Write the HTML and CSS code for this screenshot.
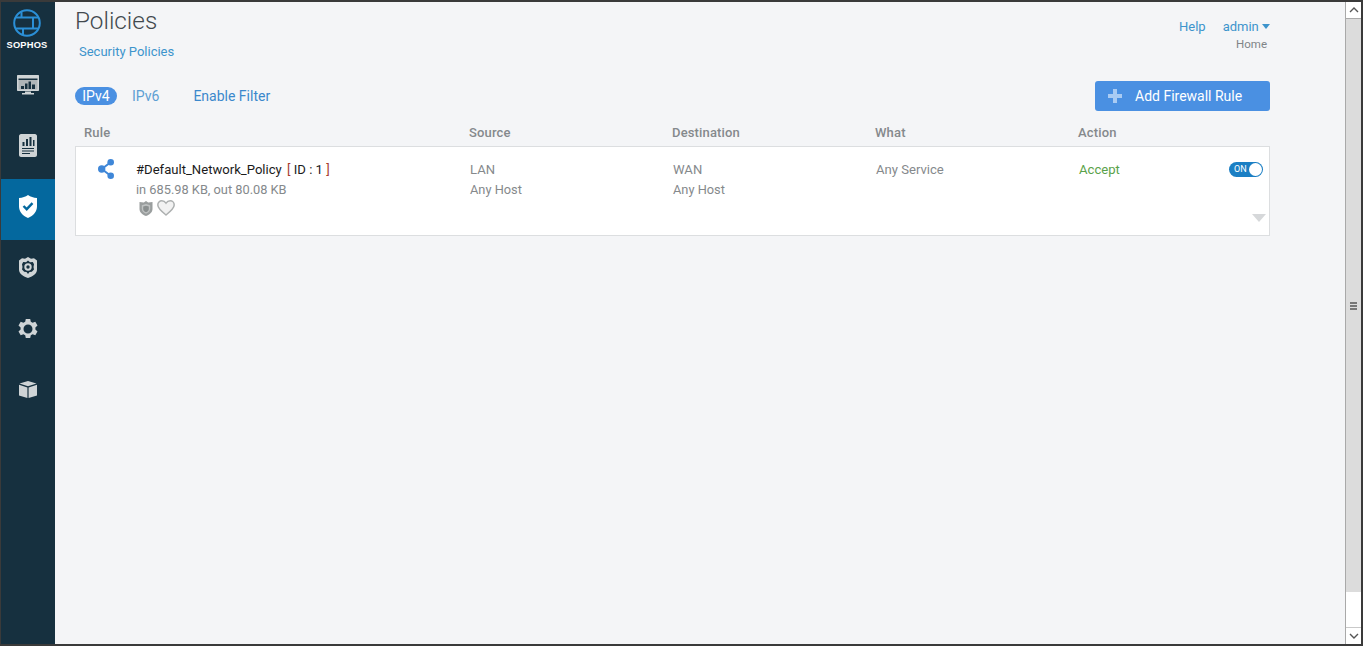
FILE: index.html
```html
<!DOCTYPE html>
<html lang="en">
<head>
<meta charset="utf-8">
<title>Policies</title>
<link rel="stylesheet" href="styles.css">
</head>
<body>
<div class="frame">
  <nav class="sidebar">
    <div class="logo">
      <svg class="logo-mark" viewBox="0 0 28 28" width="28" height="28" fill="none" stroke="#2b8fd6" stroke-width="2">
        <circle cx="14" cy="14" r="12.800"/>
        <path d="M3 8.500H25M3 19.500H25M8.500 2.500V8.500M20 8.500V19.500M10 19.500V26"/>
      </svg>
      <span class="logo-text">SOPHOS</span>
    </div>
    <a class="nav-item">
      <svg viewBox="0 0 22 20" width="22" height="20"><path fill="#cfd4d6" d="M0 1C0 .4.400 0 1 0h20c.6 0 1 .4 1 1v14c0 .6-.4 1-1 1H1c-.6 0-1-.4-1-1z"/><path fill="#16303f" d="M1.500 3.500h19v1.500h-19z"/><path fill="#aeb5b8" d="M1.500 5h19v9.500h-19z"/><path fill="#16303f" d="M4 11h3v3H4zM8 8.500h2.500V14H8zM11.500 6.500H14V14h-2.500zM15 9.500h3V14h-3z"/><path fill="#cfd4d6" d="M8 16.500h6V18h3v1.500H5V18h3z"/></svg>
    </a>
    <a class="nav-item">
      <svg viewBox="0 0 18 23" width="18" height="23"><path fill="#cfd4d6" d="M2 0h14c1 0 2 1 2 2v19c0 1-1 2-2 2H2c-1 0-2-1-2-2V2C0 1 1 0 2 0z"/><path fill="#16303f" d="M3.500 8h2v4h-2zM7 5h2v7H7zM10.500 3h2v9h-2zM14 6h1.500v6H14zM3 14h12v1H3zM3 16.500h12v1H3zM3 19h8v1H3z"/></svg>
    </a>
    <a class="nav-item active">
      <svg viewBox="0 0 18 23" width="18" height="23"><path fill="#fff" d="M9 0c2.500 1.700 5.500 2.700 9 3v8.500c0 5-3.500 9.300-9 11.500-5.500-2.200-9-6.500-9-11.500V3c3.500-.3 6.500-1.300 9-3z"/><path fill="none" stroke="#04689e" stroke-width="2.400" d="M4.500 11l3.200 3.200 5.800-6"/></svg>
    </a>
    <a class="nav-item">
      <svg viewBox="0 0 18 21" width="18" height="21"><path fill="#cfd4d6" d="M9 0l3 1.800L15 1.300 18 3.500v9c0 4-3.500 6.500-9 8.500-5.500-2-9-4.500-9-8.500v-9l3-2.200 3 .5z"/><path fill="#16303f" d="M9 3.500l2 1.700 2.800-.2 1.200 2.300-.5 2.700.5 2.500-2.200 2.300-2.300.2L9 17l-1.500-2-2.300-.2L3 12.500l.5-2.500L3 7.300 4.200 5 7 5.200z"/><circle cx="9" cy="10" r="3.700" fill="#cfd4d6"/><circle cx="9" cy="10" r="1.700" fill="#16303f"/></svg>
    </a>
    <a class="nav-item">
      <svg viewBox="0 0 20 20" width="20" height="20"><path fill="#cfd4d6" fill-rule="evenodd" d="M7.800 0h4.400l.6 2.800 1.800.9 2.700-1 2.200 3.800-2.100 1.900v2.200l2.100 1.900-2.200 3.800-2.700-1-1.800.9-.6 2.800H7.800l-.6-2.800-1.800-.9-2.700 1L.5 12.500l2.100-1.900V8.400L.5 6.500l2.200-3.800 2.700 1 1.800-.9zM10 5.500a4.500 4.500 0 1 0 0 9 4.500 4.500 0 0 0 0-9z"/></svg>
    </a>
    <a class="nav-item">
      <svg viewBox="0 0 18 17" width="18" height="17"><path fill="#cfd4d6" d="M9 0l8.500 2.600L9 5.200.5 2.600zM0 3.800l8.400 2.700V17L0 14.400zM18 3.800L9.600 6.500V17l8.400-2.600z"/></svg>
    </a>
  </nav>

  <main class="content">
    <header class="page-head">
      <div>
        <h1 class="title">Policies</h1>
        <a class="crumb">Security Policies</a>
      </div>
      <div class="user-box">
        <div class="user-links">
          <a class="link">Help</a>
          <a class="link">admin <span class="caret"></span></a>
        </div>
        <div class="home">Home</div>
      </div>
    </header>

    <div class="toolbar">
      <div class="tabs">
        <a class="pill">IPv4</a>
        <a class="tab">IPv6</a>
        <a class="filter">Enable Filter</a>
      </div>
      <button class="add-btn"><span class="plus"></span>Add Firewall Rule</button>
    </div>

    <div class="grid-row table-head">
      <span>Rule</span><span>Source</span><span>Destination</span><span>What</span><span>Action</span>
    </div>

    <section class="rule-card grid-row">
      <div class="rule-cell">
        <svg class="share" viewBox="0 0 16 20" width="16" height="20"><g fill="#3f87d8"><circle cx="12.700" cy="3.300" r="3.300"/><circle cx="3.700" cy="10" r="3.700"/><circle cx="12.700" cy="16.700" r="3.300"/></g><path fill="none" stroke="#3f87d8" stroke-width="2" d="M12.700 3.300L3.700 10l9 6.700"/></svg>
        <div>
          <div class="rule-name">#Default_Network_Policy <span class="rule-id"><b>[</b> ID : 1 <b>]</b></span></div>
          <div class="muted">in 685.98 KB, out 80.08 KB</div>
          <div class="badges">
            <svg viewBox="0 0 14 15" width="14" height="15"><path fill="#9a9e9e" d="M7 0l2.200 1.500 4.300-.5v7c0 3-2.500 5.500-6.500 7C3 13.500.5 11 .5 8V1l4.300.5z"/><path fill="#bfc2c2" d="M7 3l4.200 1.200v3.600c0 2.200-1.600 3.900-4.200 5-2.600-1.100-4.200-2.800-4.200-5V4.200z"/><path fill="#8a8f8f" d="M7 4.800l2.800.8v2.300c0 1.500-1.100 2.500-2.800 3.300-1.700-.8-2.800-1.800-2.800-3.300V5.600z"/></svg>
            <svg viewBox="0 0 18 16" width="18" height="16"><path fill="#f2f2f2" stroke="#adb0b0" stroke-width="1.500" d="M9 15C4 11 .8 8.300.8 5 .8 2.500 2.600.8 4.800.8 6.500.8 8 1.700 9 3.200 10 1.700 11.500.8 13.200.8c2.200 0 4 1.700 4 4.200 0 3.300-3.200 6-8.200 10z"/></svg>
          </div>
        </div>
      </div>
      <div><div class="cell-main">LAN</div><div class="muted">Any Host</div></div>
      <div><div class="cell-main">WAN</div><div class="muted">Any Host</div></div>
      <div><div class="cell-main">Any Service</div></div>
      <div class="action-cell">
        <div class="accept">Accept</div>
        <div class="toggle"><span class="toggle-label">ON</span><span class="knob"></span></div>
        <div class="expand"></div>
      </div>
    </section>
  </main>

  <div class="scrollbar">
    <div class="sb-btn sb-up"><svg viewBox="0 0 10 6" width="10" height="6"><path fill="none" stroke="#555" stroke-width="1.400" d="M1 5l4-4 4 4"/></svg></div>
    <div class="sb-thumb"><span class="grip"></span></div>
    <div class="sb-track"></div>
    <div class="sb-btn sb-down"><svg viewBox="0 0 10 6" width="10" height="6"><path fill="none" stroke="#555" stroke-width="1.400" d="M1 1l4 4 4-4"/></svg></div>
  </div>
</div>
</body>
</html>
```

FILE: styles.css
```css
* { box-sizing: border-box; }
html, body { margin: 0; height: 100%; overflow: hidden; }
body { font-family: "Roboto", "Liberation Sans", sans-serif; font-size: 14px; color: #7f8487; }
a { text-decoration: none; }

.frame {
  display: flex;
  width: 1363px;
  height: 646px;
  border-top: 2px solid #3a3a3a;
  border-bottom: 2px solid #3a3a3a;
  border-left: 1px solid #3a3a3a;
  border-right: 2px solid #3a3a3a;
  background: #f4f5f7;
}

.sidebar { flex: 0 0 54px; background: #16303f; display: flex; flex-direction: column; }
.logo { height: 55px; display: flex; flex-direction: column; align-items: center; padding: 7px 2px 0 0; }
.logo-mark { display: block; }
.logo-text { margin-top: 3px; font-family: "Liberation Sans", sans-serif; font-weight: 700; font-size: 9.300px; line-height: 11px; color: #fff; letter-spacing: .2px; }
.nav-item { height: 61px; display: flex; justify-content: center; align-items: center; padding-bottom: 6px; }
.nav-item.active { background: #04689e; }

.content { flex: 1; padding: 0 75px 0 20px; min-width: 0; }
.page-head { display: flex; justify-content: space-between; align-items: flex-start; height: 79px; }
.title { margin: 4px 0 0; font-size: 24.300px; line-height: 30px; font-weight: 300; color: #42494e; }
.crumb { display: block; margin: 7px 0 0 4px; font-size: 13px; line-height: 18px; color: #3d94cc; }
.user-box { padding-top: 16px; text-align: right; }
.user-links { display: flex; gap: 17px; font-size: 13px; line-height: 18px; }
.link { color: #3d94cc; }
.caret { display: inline-block; width: 0; height: 0; border: 4px solid transparent; border-top: 5px solid #3d94cc; border-bottom: 0; vertical-align: 2px; }
.home { margin: 0 3px 0 0; font-size: 11.500px; line-height: 16px; color: #7f8487; }

.toolbar { display: flex; justify-content: space-between; align-items: center; height: 30px; }
.tabs { display: flex; align-items: center; font-size: 14px; }
.pill { width: 42px; height: 18px; line-height: 18px; text-align: center; border-radius: 9px; background: #4a90e2; color: #fff; }
.tab { margin-left: 15px; color: #5c9fd3; }
.filter { margin-left: 34px; color: #3b88cc; }
.add-btn { display: flex; align-items: center; width: 175px; height: 30px; padding: 0 0 0 13px; border: 0; border-radius: 3px; background: #4a90e2; color: #fff; font: 14px "Roboto", "Liberation Sans", sans-serif; }
.plus { width: 14px; height: 14px; margin-right: 13px; background: linear-gradient(#a9cbf3, #a9cbf3) center / 14px 4px no-repeat, linear-gradient(#a9cbf3, #a9cbf3) center / 4px 14px no-repeat; }

.grid-row { display: grid; grid-template-columns: 394px 203px 203px 203px 1fr; }
.table-head { margin-top: 14px; height: 21px; padding-left: 9px; grid-template-columns: 385px 203px 203px 203px 1fr; font-size: 13px; line-height: 16px; font-weight: 500; letter-spacing: .15px; color: #85898c; }

.rule-card { height: 90px; background: #fff; border: 1px solid #dcdee0; padding-top: 13px; line-height: 20px; }
.rule-cell { display: flex; padding-left: 22px; }
.share { margin: -1px 22px 0 0; flex: none; }
.rule-name { font-size: 13.100px; color: #1b1b1b; white-space: nowrap; }
.rule-id { margin-left: 2px; }
.rule-id b { font-weight: 400; color: #a83a2e; }
.muted { font-size: 12.800px; color: #85898c; white-space: nowrap; }
.cell-main { font-size: 13.100px; color: #85898c; }
.badges { display: flex; align-items: center; gap: 4px; margin: 0 0 0 3px; }
.action-cell { position: relative; padding-right: 6px; }
.accept { font-size: 13.100px; color: #5aa24a; }
.toggle { position: absolute; top: 2px; right: 6px; width: 34px; height: 15px; border-radius: 8px; background: #1b7fc4; }
.toggle-label { position: absolute; left: 5px; top: 0; font-size: 9px; line-height: 15px; color: #fff; }
.knob { position: absolute; right: 1px; top: 1px; width: 13px; height: 13px; border-radius: 50%; background: #fff; }
.expand { position: absolute; top: 54px; right: 3px; width: 0; height: 0; border: 7px solid transparent; border-top: 8px solid #d6d8da; border-bottom: 0; }

.scrollbar { flex: 0 0 16px; display: flex; flex-direction: column; background: #fff; border-left: 1px solid #a9a9a9; }
.sb-btn { flex: none; height: 17px; display: flex; align-items: center; justify-content: center; background: #fff; }
.sb-up { border-bottom: 1px solid #a9a9a9; }
.sb-down { border-top: 1px solid #c9c9c9; }
.sb-thumb { flex: none; height: 573px; background: #dcdcdc; display: flex; align-items: center; justify-content: center; }
.grip { width: 7px; height: 8px; background: repeating-linear-gradient(#777 0 2px, transparent 2px 3px); }
.sb-track { flex: 1; }
```
